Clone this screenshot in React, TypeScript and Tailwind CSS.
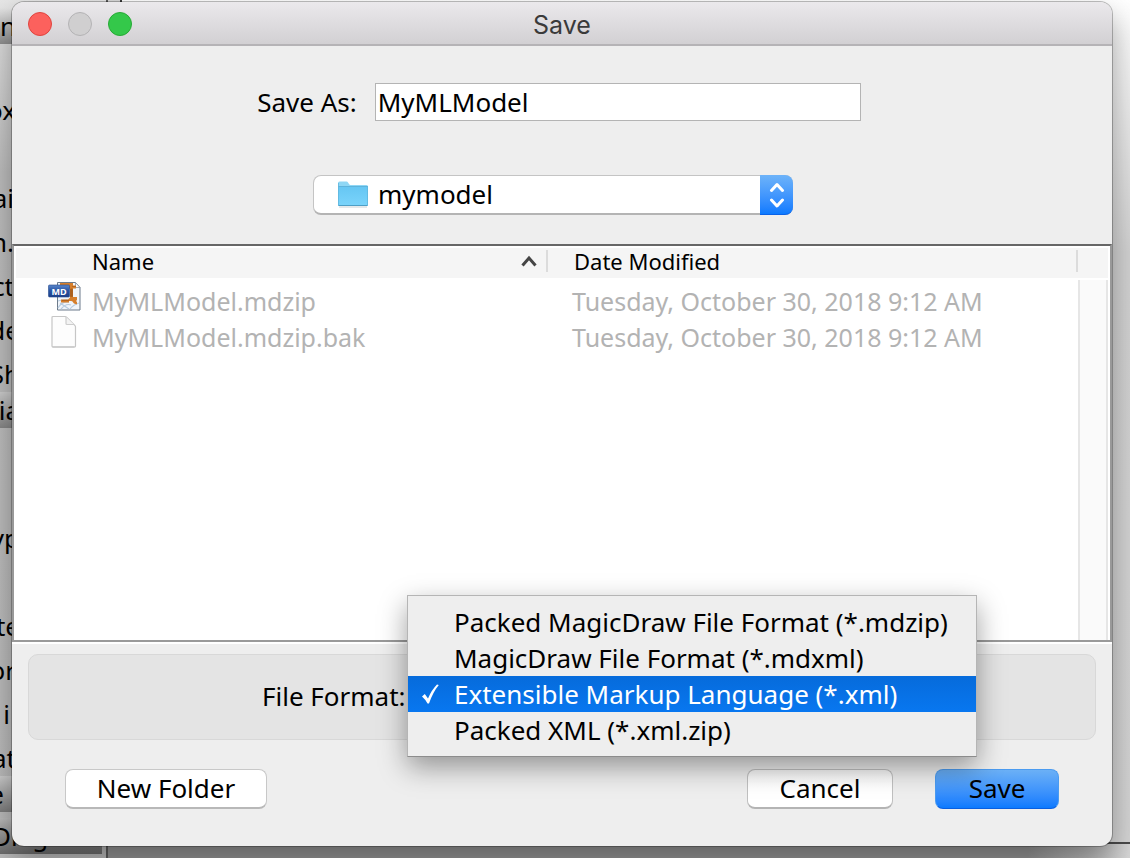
import React, { useState } from "react";

const formats = [
  "Packed MagicDraw File Format (*.mdzip)",
  "MagicDraw File Format (*.mdxml)",
  "Extensible Markup Language (*.xml)",
  "Packed XML (*.xml.zip)",
];

const files = [
  { name: "MyMLModel.mdzip", date: "Tuesday, October 30, 2018 9:12 AM", packed: true },
  { name: "MyMLModel.mdzip.bak", date: "Tuesday, October 30, 2018 9:12 AM", packed: false },
];

const paletteRows = [
  { text: "n", width: "w-4", row: "mt-2 h-9 bg-linear-to-b from-[#e4e4e4] to-[#8f8f8f]" },
  { text: "ox", width: "w-4", row: "mt-12 h-11" },
  { text: "ai", width: "w-3.5", row: "mt-11 h-11" },
  { text: "n.", width: "w-3.5", row: "h-11" },
  { text: "ct", width: "w-3.5", row: "h-11" },
  { text: "de", width: "w-5", row: "h-11" },
  { text: "Sh", width: "w-5", row: "h-9" },
  { text: "ia", width: "w-5", row: "h-9 bg-linear-to-b from-[#cdcdcd] to-[#868686]" },
  { text: "yp", width: "w-5", row: "mt-[92px] h-11" },
  { text: "te", width: "w-5", row: "mt-11 h-11" },
  { text: "or", width: "w-4", row: "h-11" },
  { text: "i", width: "w-2.5", row: "h-11" },
  { text: "at", width: "w-4", row: "h-9" },
  { text: "e", width: "w-1", row: "h-9 bg-linear-to-b from-[#cdcdcd] to-[#7c7c7c]" },
];

function FolderIcon() {
  return (
    <svg width="32" height="28" viewBox="0 0 32 28" aria-hidden="true">
      <defs>
        <linearGradient id="folder" x1="0" y1="0" x2="0" y2="1">
          <stop offset="0" stopColor="#66c6f3" />
          <stop offset="1" stopColor="#7ad4fb" />
        </linearGradient>
      </defs>
      <path d="M1 26V3q0-1.500 1.500-1.500h7q1 0 1.500 1l1 1.500q.5 1 1.500 1H29.500Q31 5 31 6.500V26z" fill="#8fd7f5" />
      <path d="M1 6.500H31V24.500q0 1-1 1H2q-1 0-1-1z" fill="url(#folder)" />
      <path d="M1 6.500H31" stroke="#5fb4dc" />
      <path d="M1.500 25.500h29" stroke="#4e9fc6" />
      <path d="M1.500 3v22M30.500 7v18" stroke="#5fb6dd" strokeWidth=".8" />
      <path d="M2 27h28" stroke="#c9d2d6" />
    </svg>
  );
}

function PackedIcon() {
  return (
    <svg width="34" height="30" viewBox="0 0 34 30" aria-hidden="true">
      <defs>
        <linearGradient id="badge" x1="0" y1="0" x2="0" y2="1">
          <stop offset="0" stopColor="#5b87cb" />
          <stop offset=".45" stopColor="#2a56a5" />
          <stop offset="1" stopColor="#1c3f8a" />
        </linearGradient>
      </defs>
      <path d="M9.500 1.500h18l4.500 5v22.500H9.500z" fill="#f1f5fa" stroke="#6d7b8b" />
      <path d="M10 20q9-3 14 0M10 27q4-7 11-6M13 28q5-6 10-4M12 22l9 6M22 28q3-4 9-6" fill="none" stroke="#b7cbe0" strokeWidth="1.200" />
      <path d="M27.500 1.500V6.500h4.500z" fill="#fff" stroke="#8593a3" strokeWidth=".8" />
      <path d="M12 2h13v2.500h3v3h-3v8.500h4v3l-1 1 1 1v2.500l-3-1-2-2.500h-3v1.500h-8v-3h7l2-2V8l-3-2h-7z" fill="#d67f2c" />
      <path d="M22.500 8h2v7.500h-2zM14 19.500h7M24 5.500h4" fill="#a9601f" stroke="#a9601f" strokeWidth=".8" />
      <rect x=".5" y="4" width="21" height="12" rx="1" fill="url(#badge)" stroke="#24488c" strokeWidth=".6" />
      <text x="11" y="13.500" textAnchor="middle" fill="#fff" fontFamily="Open Sans, sans-serif" fontSize="9" fontWeight="700">MD</text>
    </svg>
  );
}

function DocumentIcon() {
  return (
    <svg width="34" height="34" viewBox="0 0 34 34" aria-hidden="true">
      <path d="M4 2.500q0-1 1-1h12q1 0 1.800.8l8 8q.7.700.7 1.700V31q0 1-1 1H5q-1 0-1-1z" fill="#fdfdfd" stroke="#c6c6c6" strokeWidth="1.200" />
      <path d="M18 2v6.500q0 1 1 1h7" fill="#f3f3f3" stroke="#cdcdcd" strokeWidth="1.200" />
      <path d="M4.500 32h22" stroke="#bdbdbd" />
    </svg>
  );
}

export default function App() {
  const [selected, setSelected] = useState(2);
  const [name, setName] = useState("MyMLModel");

  return (
    <div className="relative isolate flex min-h-screen overflow-hidden bg-[#e2e2e2] font-['Noto_Sans',sans-serif] text-[26px] leading-8 text-black">
      <div className="absolute inset-0 -z-10 flex overflow-hidden" aria-hidden="true">
        <div className="flex w-[106px] shrink-0 flex-col bg-linear-to-b from-[#e6e6e6] via-[#bebebe] via-20% to-[#bababa]">
          {paletteRows.map((r) => (
            <div key={r.text} className={r.row}>
              <div className={"flex h-9 items-center justify-end " + r.width}>{r.text}</div>
            </div>
          ))}
          <div className="mt-1.5 flex h-9 w-[102px] items-center bg-linear-to-b from-[#bdbdbd] to-[#6c6c6c]">
            <span className="-ml-2">Diagram</span>
          </div>
        </div>
        <div className="flex grow flex-col border-l-2 border-[#5c5c5c]">
          <div className="flex grow">
            <div className="w-3.5 border-r-2 border-[#3c3c3c] bg-[#d8d8d8]" />
            <div className="grow bg-linear-to-b from-white via-[#d2d2d2] via-30% to-[#d4d4d4]" />
          </div>
          <div className="h-4 border-t-2 border-[#4a4a4a] bg-linear-to-r from-[#959595] from-90% to-[#d6d6d6]" />
        </div>
      </div>

      <main
        role="dialog"
        aria-label="Save"
        className="mt-0.5 mr-[18px] mb-3 ml-3 flex grow flex-col rounded-xl bg-[#eeeeee] shadow-[0_0_0_1px_rgba(0,0,0,0.25),0_14px_30px_rgba(0,0,0,0.35)]"
      >
        <header className="grid h-11 grid-cols-[1fr_auto_1fr] items-center rounded-t-xl border-b-2 border-[#b5b3b6] bg-linear-to-b from-[#ebe9ec] to-[#d2d0d3] px-4 pt-0.5">
          <div className="flex gap-4">
            <button aria-label="Close" className="size-6 rounded-full border border-[#e0443e] bg-[#fc615d]" />
            <button aria-label="Minimize" className="size-6 rounded-full border border-[#b4b3b5] bg-[#d0cfd0]" />
            <button aria-label="Zoom" className="size-6 rounded-full border border-[#27aa35] bg-[#34c84a]" />
          </div>
          <h1 className="pt-0.5 font-['Inter',sans-serif] text-[25px] text-[#3a3a3a]">Save</h1>
        </header>

        <div className="flex items-center justify-center gap-[18px] pt-[37px] pr-1.5">
          <label htmlFor="save-as">Save As:</label>
          <input
            id="save-as"
            value={name}
            onChange={(e) => setName(e.target.value)}
            className="h-[38px] w-[486px] border border-[#b4b4b4] bg-white px-0.5 outline-none"
          />
        </div>

        <div className="mt-[54px] flex justify-center pr-[18px]">
          <div className="relative h-10 w-[480px]">
            <select
              aria-label="Folder"
              className="size-full appearance-none rounded-lg border border-b-2 border-[#c4c4c4] border-b-[#b4b4b4] bg-white pr-10 pb-0.5 pl-16 outline-none"
            >
              <option>mymodel</option>
            </select>
            <span className="pointer-events-none absolute top-[5px] left-6">
              <FolderIcon />
            </span>
            <span className="pointer-events-none absolute inset-y-0 right-0 flex w-[33px] items-center justify-center rounded-r-lg border-b border-[#0a62e8] bg-linear-to-b from-[#6db3f9] to-[#0a7aff]">
              <svg width="16" height="26" viewBox="0 0 16 26" fill="none" stroke="white" strokeWidth="3" strokeLinecap="round" strokeLinejoin="round" aria-hidden="true">
                <path d="M2.500 8.500L8 2.500l5.500 6M2.500 18L8 24l5.500-6" />
              </svg>
            </span>
          </div>
        </div>

        <div className="mt-[29px] border-2 border-[#999999] border-t-[#666666] bg-white pt-0.5">
          <table className="w-full table-fixed border-collapse text-left">
            <colgroup>
              <col className="w-[534px]" />
              <col />
              <col className="w-8" />
            </colgroup>
            <thead className="text-[22px]">
              <tr className="h-[30px] bg-[#f5f5f5]">
                <th scope="col" className="p-0 font-normal">
                  <div className="flex h-[30px] items-center justify-between border-l-2 border-white pb-1 pl-[76px]">
                    Name
                    <span className="flex items-center gap-[9px]">
                      <svg width="16" height="12" viewBox="0 0 16 12" fill="none" stroke="#454545" strokeWidth="3" aria-hidden="true">
                        <path d="M1.500 10.500L8 3l6.500 7.500" />
                      </svg>
                      <span className="h-[22px] w-0.5 bg-[#dcdcdc]" />
                    </span>
                  </div>
                </th>
                <th scope="col" className="p-0 font-normal">
                  <div className="flex h-[30px] items-center justify-between pb-1 pl-[26px]">
                    Date Modified
                    <span className="h-[22px] w-0.5 bg-[#dcdcdc]" />
                  </div>
                </th>
                <td className="p-0">
                  <div className="h-[30px] border-r-2 border-white" />
                </td>
              </tr>
            </thead>
            <tbody className="text-[25px] text-[#b3b3b3]">
              {files.map((f, i) => (
                <tr key={f.name} className="h-9">
                  <td className="p-0">
                    <div className="flex h-9 items-center gap-2.5 pl-[34px]">
                      {f.packed ? <PackedIcon /> : <DocumentIcon />}
                      <span className="pt-2.5">{f.name}</span>
                    </div>
                  </td>
                  <td className="p-0">
                    <div className="flex h-9 items-center pt-2.5 pl-6">{f.date}</div>
                  </td>
                  {i === 0 && (
                    <td rowSpan={3} className="p-0 pt-0.5 align-top">
                      <div className="mr-0.5 h-[360px] border-x-2 border-[#e6e6e6] bg-[#fafafa]" />
                    </td>
                  )}
                </tr>
              ))}
              <tr className="h-[290px]">
                <td colSpan={2} className="p-0" />
              </tr>
            </tbody>
          </table>
        </div>

        <div className="border-t-2 border-white px-4 pt-2.5">
          <div className="relative flex h-[86px] items-center rounded-[10px] border border-[#d8d8d8] bg-[#e4e4e4] pb-0.5 pl-[233px]">
            <span id="format-label">File Format:</span>
            <ul
              role="listbox"
              aria-labelledby="format-label"
              className="absolute -top-[60px] left-[378px] w-[570px] border border-[#b5b5b5] border-b-[#8c8c8c] bg-[#eeeeee] py-2 shadow-[0_10px_26px_rgba(0,0,0,0.38)]"
            >
              {formats.map((f, i) => (
                <li key={f} role="presentation">
                  <button
                    role="option"
                    aria-selected={i === selected}
                    onClick={() => setSelected(i)}
                    className={
                      "flex h-9 w-full items-center pl-[14px] text-left whitespace-nowrap " +
                      (i === selected ? "bg-linear-to-b from-[#066bdb] to-[#0877f0] text-white" : "")
                    }
                  >
                    <span className="w-8 shrink-0">
                      {i === selected && (
                        <svg width="17" height="20" viewBox="0 0 17 20" aria-hidden="true">
                          <path d="M0 12.500L2.800 10 6 14.500Q9.500 6 15 .5L16.800 1Q11 8 7 19.500H5.500Q3.500 15.500 0 12.500z" fill="white" />
                        </svg>
                      )}
                    </span>
                    {f}
                  </button>
                </li>
              ))}
            </ul>
          </div>
        </div>

        <footer className="flex gap-[42px] px-[53px] pt-[29px] pb-9">
          <button className="mr-auto h-10 w-[202px] rounded-lg border border-b-2 border-[#c8c8c8] border-b-[#b8b8b8] bg-white pb-0.5">
            New Folder
          </button>
          <button className="h-10 w-[146px] rounded-lg border border-b-2 border-[#c0c0c0] border-b-[#b4b4b4] bg-linear-to-b from-[#f8f8f8] to-white to-50% pb-0.5">
            Cancel
          </button>
          <button className="h-10 w-[124px] rounded-lg border border-[#4b9bf0] border-b-[#0a5fe0] bg-linear-to-b from-[#6bb0f6] to-[#0a7aff] pb-0.5">
            Save
          </button>
        </footer>
      </main>
    </div>
  );
}
